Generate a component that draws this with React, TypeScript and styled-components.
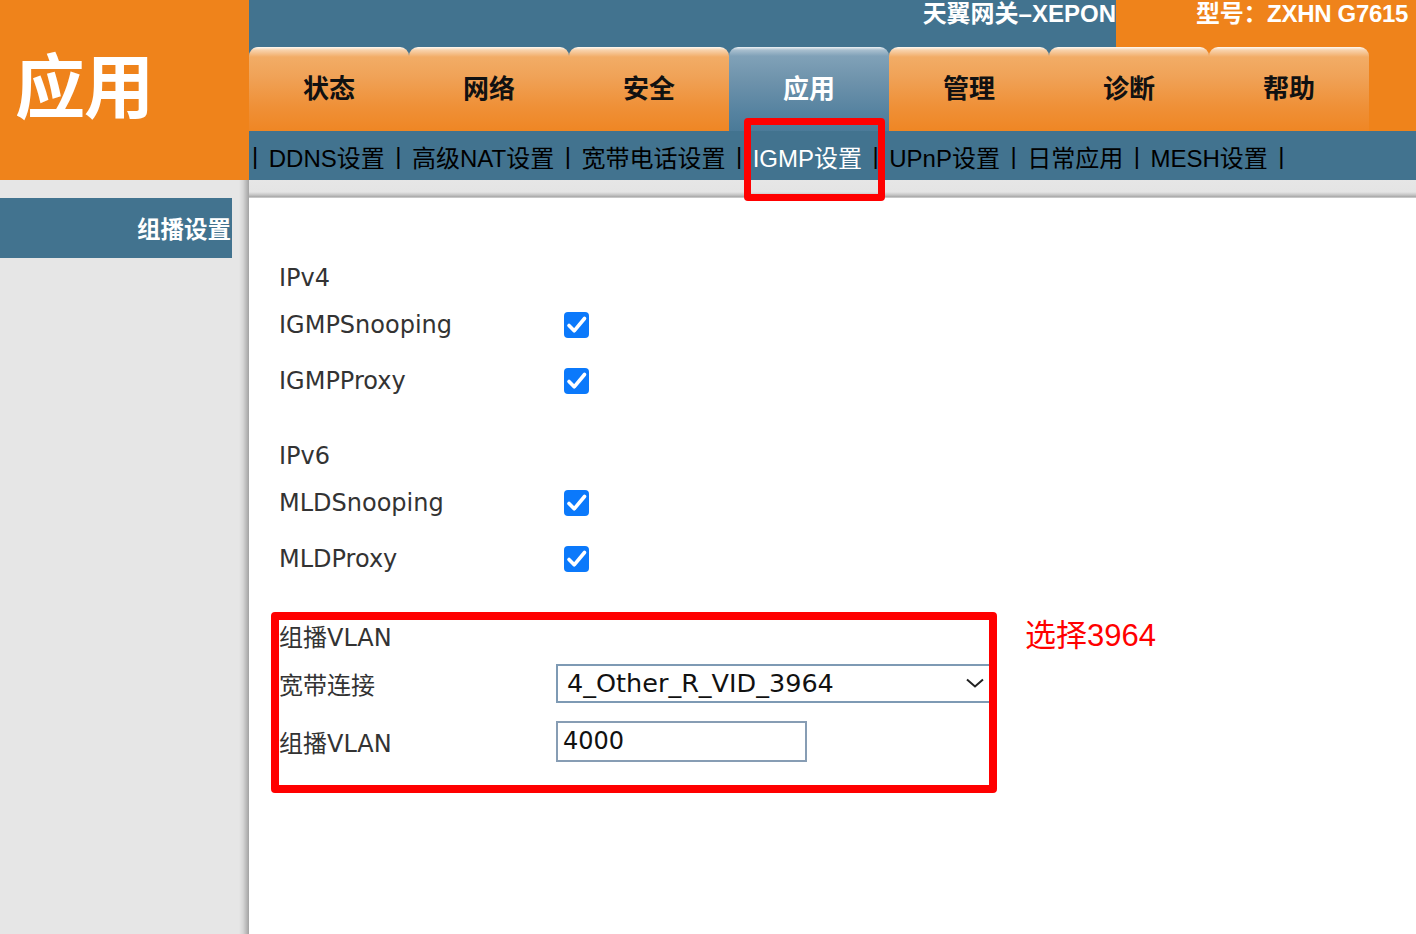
import React from "react";
import styled, { createGlobalStyle } from "styled-components";

const ORANGE = "#ef831b";
const BLUE = "#42738f";

const Global = createGlobalStyle`
  html, body { margin: 0; padding: 0; background: #fff; }
  body { overflow: hidden; }
  #root { min-height: 100vh; }
`;

const Page = styled.div`
  width: 1416px;
  height: 934px;
  overflow: hidden;
  display: grid;
  grid-template-rows: 180px 1fr;
  font-family: "Liberation Sans", "Noto Sans CJK SC", sans-serif;
`;

const Header = styled.header`
  position: relative;
  display: grid;
  grid-template-columns: 249px 1fr;
`;

const Brand = styled.div`
  background: ${ORANGE};
  color: #fff;
  font-family: "Noto Sans CJK SC", sans-serif;
  font-weight: 700;
  font-size: 70px;
  line-height: 1;
  padding: 48px 0 0 15px;
  letter-spacing: -1px;
`;

const HeaderMain = styled.div`
  display: flex;
  flex-direction: column;
  min-width: 0;
`;

const TopBar = styled.div`
  height: 47px;
  display: flex;
  color: #fff;
  font-weight: 700;
  font-size: 24px;
  line-height: 28px;
  white-space: nowrap;
`;

const Product = styled.div`
  width: 867px;
  background: ${BLUE};
  text-align: right;
`;

const Model = styled.div`
  flex: 1;
  background: ${ORANGE};
  padding-left: 80px;
  overflow: hidden;
  letter-spacing: -0.3px;
`;

const TabBar = styled.nav`
  height: 84px;
  display: flex;
  background: linear-gradient(to right, ${BLUE} 867px, ${ORANGE} 867px);
`;

const Tab = styled.div<{ $active?: boolean }>`
  width: 160px;
  height: 84px;
  box-sizing: border-box;
  padding-bottom: 5px;
  display: flex;
  align-items: center;
  justify-content: center;
  font-family: "Noto Sans CJK SC", sans-serif;
  font-weight: 700;
  font-size: 26px;
  border-radius: 9px 9px 0 0;
  color: ${(p) => (p.$active ? "#fff" : "#111")};
  background: ${(p) =>
    p.$active
      ? "linear-gradient(#eef3f6 0px, #a9bfcf 3px, #80a1b8 9px, #6d92ab 35px, #5683a0 65px, #4b7a98 84px)"
      : "linear-gradient(#fffaf4 0px, #f8d3ae 3px, #f2ac66 10px, #f0a257 30px, #ef9037 60px, #ef8624 84px)"};
`;

const SubNav = styled.div`
  height: 49px;
  background: ${BLUE};
  display: flex;
  align-items: center;
  padding: 1px 0 0 3px;
  box-sizing: border-box;
  font-size: 24px;
  color: #000;
  white-space: nowrap;
`;

const Sep = styled.span<{ $first?: boolean }>`
  margin: 0 10.5px 0 ${(p) => (p.$first ? 0 : 10.5)}px;
`;

const SubLink = styled.span<{ $active?: boolean }>`
  color: ${(p) => (p.$active ? "#fff" : "#000")};
`;

const NoteFrame = styled.div<{ $w: number; $h: number; $x: number; $y: number; $b: number }>`
  position: absolute;
  left: ${(p) => p.$x}px;
  top: ${(p) => p.$y}px;
  width: ${(p) => p.$w}px;
  height: ${(p) => p.$h}px;
  box-sizing: border-box;
  border: ${(p) => p.$b}px solid #ff0000;
  border-radius: 4px;
  pointer-events: none;
  z-index: 5;
`;

const Body = styled.div`
  display: grid;
  grid-template-columns: 249px 1fr;
`;

const Sidebar = styled.aside`
  background: linear-gradient(
    to right,
    #e6e6e6 calc(100% - 10px),
    #d6d6d6 calc(100% - 6px),
    #b4b4b4 calc(100% - 2px),
    #a2a2a2 100%
  );
  padding-top: 18px;
`;

const SideItem = styled.div`
  width: 232px;
  height: 60px;
  background: ${BLUE};
  color: #fff;
  font-family: "Noto Sans CJK SC", sans-serif;
  font-weight: 700;
  font-size: 23.5px;
  display: flex;
  align-items: center;
  justify-content: flex-end;
  padding-right: 1px;
  box-sizing: border-box;
`;

const ContentCol = styled.main`
  display: flex;
  flex-direction: column;
  background: #fff;
`;

const TopBand = styled.div`
  height: 18px;
  background: linear-gradient(#e6e6e6 0, #e4e4e4 12px, #c4c4c4 15px, #a6a6a6 17px, #e8e8e8 18px);
`;

const Panel = styled.section`
  padding: 61px 0 0 30px;
  font-family: "DejaVu Sans", "Noto Sans CJK SC", sans-serif;
  font-size: 24px;
  color: #333;
`;

const Row = styled.div<{ $h: number; $mt?: number }>`
  height: ${(p) => p.$h}px;
  margin-top: ${(p) => p.$mt ?? 0}px;
  display: flex;
  align-items: center;
`;

const Label = styled.div`
  width: 277px;
  flex: none;
  white-space: nowrap;
`;

const Check = styled.span`
  width: 25px;
  height: 26px;
  margin-left: 8px;
  border-radius: 4px;
  background: #0b79fb;
  display: inline-flex;
  align-items: center;
  justify-content: center;
`;

const VlanBox = styled.div`
  position: relative;
  margin: 25px 0 0 -8px;
  padding: 8px 0 27px 8px;
  width: 726px;
  box-sizing: border-box;
`;

const SelectBox = styled.div`
  width: 436px;
  height: 39px;
  box-sizing: border-box;
  border: 2px solid #7e9ab4;
  display: flex;
  align-items: center;
  justify-content: space-between;
  padding: 0 6px 0 9px;
  color: #111;
  font-size: 25.5px;
`;

const InputBox = styled.div`
  width: 251px;
  height: 41px;
  box-sizing: border-box;
  border: 2px solid #879db4;
  display: flex;
  align-items: center;
  padding-left: 5px;
  color: #111;
`;

const Hint = styled.div`
  position: absolute;
  left: 754px;
  top: 5px;
  font-family: "Liberation Sans", "Noto Sans CJK SC", sans-serif;
  font-size: 31px;
  line-height: 38px;
  color: #ff0000;
  white-space: nowrap;
`;

const CheckIcon = () => (
  <svg width="25" height="26" viewBox="0 0 25 26">
    <path d="M5 13.5 L10.2 18.8 L20.5 6.5" fill="none" stroke="#fff" strokeWidth="3.6" strokeLinecap="round" strokeLinejoin="round" />
  </svg>
);

const Chevron = () => (
  <svg width="18" height="10" viewBox="0 0 18 10">
    <path d="M1 1.5 L9 8.5 L17 1.5" fill="none" stroke="#222" strokeWidth="2" />
  </svg>
);

const tabs = ["状态", "网络", "安全", "应用", "管理", "诊断", "帮助"];
const links = ["DDNS设置", "高级NAT设置", "宽带电话设置", "IGMP设置", "UPnP设置", "日常应用", "MESH设置"];

const CheckRow = ({ label }: { label: string }) => (
  <Row $h={56}>
    <Label>{label}</Label>
    <Check>
      <CheckIcon />
    </Check>
  </Row>
);

export default function App() {
  return (
    <Page>
      <Global />
      <Header>
        <Brand>应用</Brand>
        <HeaderMain>
          <TopBar>
            <Product>天翼网关–XEPON</Product>
            <Model>型号：ZXHN G7615</Model>
          </TopBar>
          <TabBar>
            {tabs.map((t) => (
              <Tab key={t} $active={t === "应用"}>
                {t}
              </Tab>
            ))}
          </TabBar>
          <SubNav>
            <Sep $first>|</Sep>
            {links.map((l) => (
              <React.Fragment key={l}>
                <SubLink $active={l === "IGMP设置"}>{l}</SubLink>
                <Sep>|</Sep>
              </React.Fragment>
            ))}
          </SubNav>
        </HeaderMain>
        <NoteFrame $x={744} $y={118} $w={141} $h={83} $b={7} />
      </Header>
      <Body>
        <Sidebar>
          <SideItem>组播设置</SideItem>
        </Sidebar>
        <ContentCol>
          <TopBand />
          <Panel>
            <Row $h={38}>
              <Label>IPv4</Label>
            </Row>
            <CheckRow label="IGMPSnooping" />
            <CheckRow label="IGMPProxy" />
            <Row $h={38} $mt={28}>
              <Label>IPv6</Label>
            </Row>
            <CheckRow label="MLDSnooping" />
            <CheckRow label="MLDProxy" />
            <VlanBox>
              <Row $h={30}>
                <Label>组播VLAN</Label>
              </Row>
              <Row $h={66}>
                <Label>宽带连接</Label>
                <SelectBox>
                  <span>4_Other_R_VID_3964</span>
                  <Chevron />
                </SelectBox>
              </Row>
              <Row $h={50}>
                <Label>组播VLAN</Label>
                <InputBox>4000</InputBox>
              </Row>
              <NoteFrame $x={0} $y={0} $w={726} $h={181} $b={8} />
              <Hint>选择3964</Hint>
            </VlanBox>
          </Panel>
        </ContentCol>
      </Body>
    </Page>
  );
}
